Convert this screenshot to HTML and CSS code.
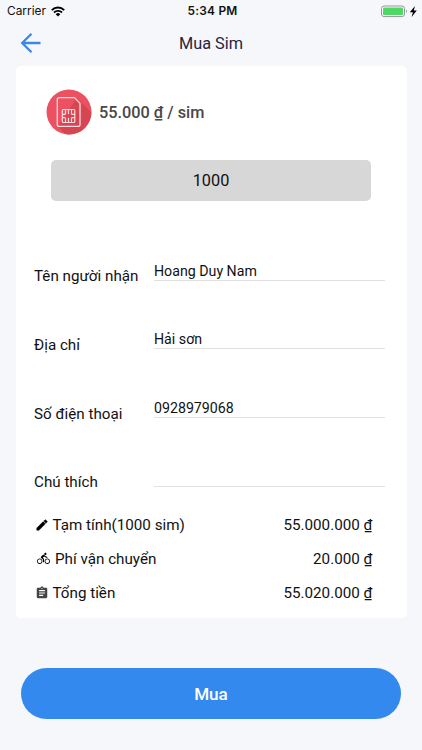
FILE: index.html
```html
<!DOCTYPE html>
<html lang="vi">
<head>
<meta charset="utf-8">
<title>Mua Sim</title>
<link rel="stylesheet" href="styles.css">
</head>
<body>
<div class="status">
  <div class="carrier"><span>Carrier</span>
    <svg class="wifi" width="14" height="11" viewBox="0 0 14 11"><path d="M.8 4.100a8.900 8.900 0 0 1 12.400 0" fill="none" stroke="#000" stroke-width="2"/><path d="M3 6.500a5.800 5.800 0 0 1 8 0" fill="none" stroke="#000" stroke-width="1.800"/><path d="M4.700 8.200a3.300 3.300 0 0 1 4.600 0L7 10.500z"/></svg>
  </div>
  <div class="time">5:34 PM</div>
  <svg class="battery" width="37" height="13" viewBox="0 0 37 13"><rect x=".5" y="1" width="23" height="10.600" rx="2.600" fill="#fff" stroke="#929496"/><rect x="2" y="2.500" width="20" height="7.600" rx="1.200" fill="#4cd964"/><path d="M25 4.600c1.200.4 1.200 3 0 3.400z" fill="#929496"/><path d="M34 1 28.800 7.200h3.100L30.600 12 35.800 5.600h-3z"/></svg>
</div>
<header class="navbar">
  <svg class="back" width="22" height="22" viewBox="0 0 22 22"><path d="M20.500 11H2M11.500 1.700 2.200 11 11.500 20.300" fill="none" stroke="#3d87e4" stroke-width="2.300"/></svg>
  <h1>Mua Sim</h1>
</header>
<main class="card">
  <div class="product">
    <svg class="sim" width="46" height="46" viewBox="0 0 46 46"><defs><clipPath id="disc"><circle cx="23" cy="23" r="22.500"/></clipPath></defs><circle cx="23" cy="23" r="22.500" fill="#eb5160"/><path clip-path="url(#disc)" d="M31 9 46 24v22H20l-8-9z" fill="#d64552"/><path d="M13.300 8.600h15.200l5.500 5.600v21.200a2 2 0 0 1-2 2H13.300a2 2 0 0 1-2-2V10.600a2 2 0 0 1 2-2z" fill="none" stroke="#fbdadd" stroke-width="1.300"/><path d="M17.300 20.500h10.500a1 1 0 0 1 1 1v11a1 1 0 0 1-1 1H17.300a1 1 0 0 1-1-1v-11a1 1 0 0 1 1-1zM19.500 20.500v4.800M22.500 20.500v4.800M25.500 20.500v4.800M19.500 33.500v-4.800M22.500 33.500v-4.800M25.500 33.500v-4.800M16.300 25.300h3.200M25.500 25.300h3.300M16.300 28.700h3.200M25.500 28.700h3.300" fill="none" stroke="#fbdadd" stroke-width="1.200"/></svg>
    <span class="price">55.000 ₫ / sim</span>
  </div>
  <div class="quantity">1000</div>
  <div class="fields">
    <div class="field"><label>Tên người nhận</label><div class="value">Hoang Duy Nam</div></div>
    <div class="field"><label>Địa chỉ</label><div class="value">Hải sơn</div></div>
    <div class="field"><label>Số điện thoại</label><div class="value">0928979068</div></div>
    <div class="field"><label>Chú thích</label><div class="value"></div></div>
  </div>
  <div class="totals">
    <div class="row"><svg width="14" height="14" viewBox="0 0 24 24"><path d="M3 17.250V21h3.750L17.810 9.940l-3.750-3.750L3 17.250zM20.710 7.040a1 1 0 0 0 0-1.410l-2.340-2.340a1 1 0 0 0-1.410 0l-1.830 1.830 3.750 3.750 1.830-1.830z" stroke="#000" stroke-width=".8"/></svg><span class="name">Tạm tính(1000 sim)</span><span>55.000.000 ₫</span></div>
    <div class="row"><svg class="bike" width="13" height="13" viewBox="0 0 24 24"><path d="M15.500 5.500c1.100 0 2-.9 2-2s-.9-2-2-2-2 .9-2 2 .9 2 2 2zM5 12c-2.800 0-5 2.200-5 5s2.200 5 5 5 5-2.200 5-5-2.200-5-5-5zm0 8.500c-1.900 0-3.500-1.600-3.500-3.500s1.600-3.500 3.500-3.500 3.500 1.600 3.500 3.500-1.600 3.500-3.500 3.500zm5.800-10 2.400-2.400.8.8c1.300 1.300 3 2.100 5.100 2.100V9c-1.500 0-2.700-.6-3.600-1.500l-1.900-1.900c-.5-.4-1-.6-1.600-.6s-1.100.2-1.400.6L7.800 8.400c-.4.4-.6.9-.6 1.400 0 .6.200 1.100.6 1.400L11 14v5h2v-6.200l-2.200-2.300zM19 12c-2.800 0-5 2.200-5 5s2.200 5 5 5 5-2.200 5-5-2.200-5-5-5zm0 8.500c-1.900 0-3.500-1.600-3.500-3.500s1.600-3.500 3.500-3.500 3.500 1.600 3.500 3.500-1.600 3.500-3.500 3.500z"/></svg><span class="name">Phí vận chuyển</span><span>20.000 ₫</span></div>
    <div class="row"><svg width="14" height="14" viewBox="0 0 24 24"><path fill="#444" d="M19 3h-4.180C14.400 1.840 13.300 1 12 1s-2.400.84-2.820 2H5c-1.100 0-2 .9-2 2v14c0 1.100.9 2 2 2h14c1.100 0 2-.9 2-2V5c0-1.100-.9-2-2-2zm-7 0a1 1 0 1 1 0 2 1 1 0 0 1 0-2zm2 14H7v-2h7v2zm3-4H7v-2h10v2zm0-4H7V7h10v2z"/></svg><span class="name">Tổng tiền</span><span>55.020.000 ₫</span></div>
  </div>
</main>
<button class="buy">Mua</button>
</body>
</html>
```
FILE: styles.css
```css
* { box-sizing: border-box; }
body {
  margin: 0;
  height: 750px;
  overflow: hidden;
  background: #f5f7fa;
  color: #111;
  font-family: Roboto, sans-serif;
}
svg { display: block; flex: none; }
.status {
  display: grid;
  grid-template-columns: 1fr auto 1fr;
  align-items: center;
  height: 22px;
  padding: 0 4px 0 7px;
  font: 11.9px/22px Inter, sans-serif;
  color: #111;
}
.carrier { display: flex; align-items: center; gap: 5px; }
.time { font-weight: 600; letter-spacing: .25px; }
.battery { justify-self: end; }
.navbar {
  display: grid;
  grid-template-columns: 60px 1fr 60px;
  align-items: center;
  height: 43.5px;
}
.back { margin-left: 20px; margin-top: -2px; }
.navbar h1 {
  margin: 0;
  text-align: center;
  font-weight: 400;
  font-size: 16.3px;
  line-height: 44px;
  color: #25253f;
}
.card {
  width: 391px;
  height: 552px;
  margin-left: 15.5px;
  padding: 24px 0 0;
  background: #fff;
  border-radius: 5px;
}
.product { display: flex; align-items: center; gap: 7.5px; height: 46px; padding-left: 30px; }
.sim { margin-top: -1px; }
.price { font-size: 16.3px; line-height: 20px; padding-top: 1px; font-weight: 500; color: #484848; }
.quantity {
  width: 320px;
  height: 41px;
  margin: 24.5px 0 0 35.5px;
  border-radius: 5px;
  background: #d7d7d7;
  text-align: center;
  font-size: 16.3px;
  line-height: 41px;
}
.fields { padding: 58.8px 21.5px 0 18.5px; }
.field { display: grid; grid-template-columns: 120px 1fr; height: 68.7px; }
.field label { padding-top: 6.5px; font-size: 15.2px; line-height: 20px; }
.value { height: 21px; border-bottom: 1px solid #e0e0e0; font-size: 14.2px; line-height: 22px; }
.totals { padding: 0 34.2px 0 19px; margin-top: -27px; }
.row { display: flex; align-items: center; height: 34px; font-size: 15.2px; }
.name { flex: 1; margin-left: 4px; }
.bike { margin: 0 1.5px 0 2px; }
.buy {
  display: block;
  width: 380px;
  height: 51px;
  margin: 50.5px 0 0 21px;
  border: 0;
  border-radius: 26px;
  background: #3489ee;
  color: #fff;
  font: 500 17.1px/51px Roboto, sans-serif;
}
```
